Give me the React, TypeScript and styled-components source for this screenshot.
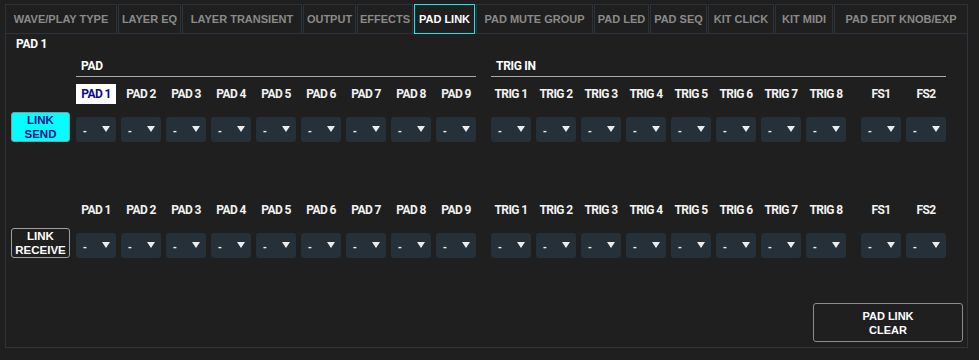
import React from "react";
import styled, { createGlobalStyle } from "styled-components";

const GlobalStyle = createGlobalStyle`
  html, body { margin: 0; padding: 0; background: #1f1f1f; }
  body { font-family: "Liberation Sans", Arial, sans-serif; }
  * { box-sizing: border-box; }
`;

const Page = styled.div`
  width: 979px;
  height: 360px;
  padding: 4px 0 0 5px;
  background: #1f1f1f;
`;

const TabBar = styled.div`
  display: flex;
  gap: 1px;
  height: 30px;
  margin-bottom: -1px;
  position: relative;
  z-index: 1;
`;

const Tab = styled.div<{ $w: number; $active?: boolean }>`
  width: ${(p) => p.$w}px;
  height: 30px;
  border: 1px solid ${(p) => (p.$active ? "#19e6ea" : "#2b323a")};
  display: flex;
  align-items: center;
  justify-content: center;
  font-family: "Liberation Sans", Arial, sans-serif;
  font-weight: 700;
  font-size: 11px;
  color: ${(p) => (p.$active ? "#ffffff" : "#8a8a8a")};
  white-space: nowrap;
  background: #1f1f1f;
`;

const Panel = styled.div`
  width: 963px;
  height: 315px;
  border: 1px solid #2e353d;
  display: flex;
  flex-direction: column;
`;

const Title = styled.div`
  height: 20px;
  line-height: 20px;
  margin-left: 10px;
  font-family: Roboto, "Liberation Sans", sans-serif;
  font-weight: 700;
  font-size: 12px;
  letter-spacing: -0.3px;
  color: #ffffff;
`;

const Row = styled.div<{ $top: number }>`
  display: flex;
  align-items: flex-end;
  margin-top: ${(p) => p.$top}px;
  padding-left: 70px;
`;

const LinkRow = styled.div<{ $top: number }>`
  display: flex;
  align-items: flex-end;
  margin-top: ${(p) => p.$top}px;
  padding-left: 5px;
`;

const Group = styled.div<{ $gapLeft?: number }>`
  display: flex;
  gap: 5px;
  margin-left: ${(p) => p.$gapLeft ?? 0}px;
`;

const GroupHeader = styled.div<{ $w: number; $gapLeft?: number }>`
  width: ${(p) => p.$w}px;
  height: 21px;
  line-height: 20px;
  margin-left: ${(p) => p.$gapLeft ?? 0}px;
  padding-left: 5px;
  border-bottom: 1px solid #a9a9a9;
  font-family: Roboto, "Liberation Sans", sans-serif;
  font-weight: 700;
  font-size: 12px;
  letter-spacing: -0.3px;
  color: #ffffff;
`;

const ColLabel = styled.div<{ $selected?: boolean }>`
  width: 40px;
  height: 20px;
  display: flex;
  align-items: center;
  justify-content: center;
  font-family: Roboto, "Liberation Sans", sans-serif;
  font-weight: 700;
  font-size: 12px;
  letter-spacing: -0.6px;
  white-space: nowrap;
  color: ${(p) => (p.$selected ? "#0a0a8c" : "#f2f2f2")};
  background: ${(p) => (p.$selected ? "#ffffff" : "transparent")};
`;

const LinkButton = styled.div<{ $active?: boolean }>`
  width: 59px;
  height: 30px;
  margin-right: 6px;
  border: 1px solid ${(p) => (p.$active ? "#7f9aa0" : "#a0a0a0")};
  border-radius: 3px;
  background: ${(p) => (p.$active ? "#00ffff" : "#1f1f1f")};
  color: ${(p) => (p.$active ? "#0a0a8c" : "#ffffff")};
  font-family: "Liberation Sans", Arial, sans-serif;
  font-weight: 700;
  font-size: 11.5px;
  line-height: 14px;
  text-align: center;
  display: flex;
  align-items: center;
  justify-content: center;
`;

const Select = styled.div`
  width: 40px;
  height: 25px;
  border-radius: 3px;
  background: #253039;
  display: flex;
  align-items: center;
  justify-content: space-between;
  padding: 0 6px 0 7px;
  font-family: "Liberation Sans", Arial, sans-serif;
  font-weight: 700;
  font-size: 11px;
  color: #f0f0f0;
`;

const Caret = styled.span`
  width: 0;
  height: 0;
  border-left: 4px solid transparent;
  border-right: 4px solid transparent;
  border-top: 6px solid #ececec;
  margin-top: -1px;
`;

const Spacer = styled.div<{ $h: number }>`
  height: ${(p) => p.$h}px;
  flex: none;
`;

const Footer = styled.div`
  display: flex;
  justify-content: flex-end;
  margin-top: 45px;
  padding-right: 4px;
`;

const ClearButton = styled.div`
  width: 150px;
  height: 39px;
  border: 1px solid #8c8c8c;
  border-radius: 3px;
  display: flex;
  align-items: center;
  justify-content: center;
  text-align: center;
  font-family: "Liberation Sans", Arial, sans-serif;
  font-weight: 700;
  font-size: 11px;
  line-height: 14px;
  color: #ffffff;
`;

const tabs: [string, number][] = [
  ["WAVE/PLAY TYPE", 112],
  ["LAYER EQ", 63],
  ["LAYER TRANSIENT", 120],
  ["OUTPUT", 53],
  ["EFFECTS", 56],
  ["PAD LINK", 61],
  ["PAD MUTE GROUP", 117],
  ["PAD LED", 55],
  ["PAD SEQ", 57],
  ["KIT CLICK", 66],
  ["KIT MIDI", 58],
  ["PAD EDIT KNOB/EXP", 134],
];

const pads = Array.from({ length: 9 }, (_, i) => `PAD ${i + 1}`);
const trigs = Array.from({ length: 8 }, (_, i) => `TRIG ${i + 1}`);
const fs = ["FS1", "FS2"];

const Labels: React.FC<{ selected?: string; top: number }> = ({ selected, top }) => (
  <Row $top={top}>
    <Group>
      {pads.map((p) => (
        <ColLabel key={p} $selected={p === selected}>
          {p}
        </ColLabel>
      ))}
    </Group>
    <Group $gapLeft={15}>
      {trigs.map((p) => (
        <ColLabel key={p}>{p}</ColLabel>
      ))}
    </Group>
    <Group $gapLeft={15}>
      {fs.map((p) => (
        <ColLabel key={p}>{p}</ColLabel>
      ))}
    </Group>
  </Row>
);

const Selects: React.FC<{ n: number }> = ({ n }) => (
  <Group>
    {Array.from({ length: n }, (_, i) => (
      <Select key={i}>
        <span>-</span>
        <Caret />
      </Select>
    ))}
  </Group>
);

const LinkLine: React.FC<{ label: React.ReactNode; active?: boolean }> = ({ label, active }) => (
  <LinkRow $top={8}>
    <LinkButton $active={active}>{label}</LinkButton>
    <Selects n={9} />
    <Group $gapLeft={15}>
      <Selects n={8} />
    </Group>
    <Group $gapLeft={15}>
      <Selects n={2} />
    </Group>
  </LinkRow>
);

export default function App() {
  return (
    <>
      <GlobalStyle />
      <Page>
        <TabBar>
          {tabs.map(([t, w]) => (
            <Tab key={t} $w={w} $active={t === "PAD LINK"}>
              {t}
            </Tab>
          ))}
        </TabBar>
        <Panel>
          <Title>PAD 1</Title>
          <Row $top={2}>
            <GroupHeader $w={400}>PAD</GroupHeader>
            <GroupHeader $w={455} $gapLeft={15}>TRIG IN</GroupHeader>
          </Row>
          <Labels selected="PAD 1" top={7} />
          <LinkLine
            active
            label={
              <>
                LINK
                <br />
                SEND
              </>
            }
          />
          <Spacer $h={58} />
          <Labels top={0} />
          <LinkLine
            label={
              <>
                LINK
                <br />
                RECEIVE
              </>
            }
          />
          <Footer>
            <ClearButton>
              PAD LINK
              <br />
              CLEAR
            </ClearButton>
          </Footer>
        </Panel>
      </Page>
    </>
  );
}
